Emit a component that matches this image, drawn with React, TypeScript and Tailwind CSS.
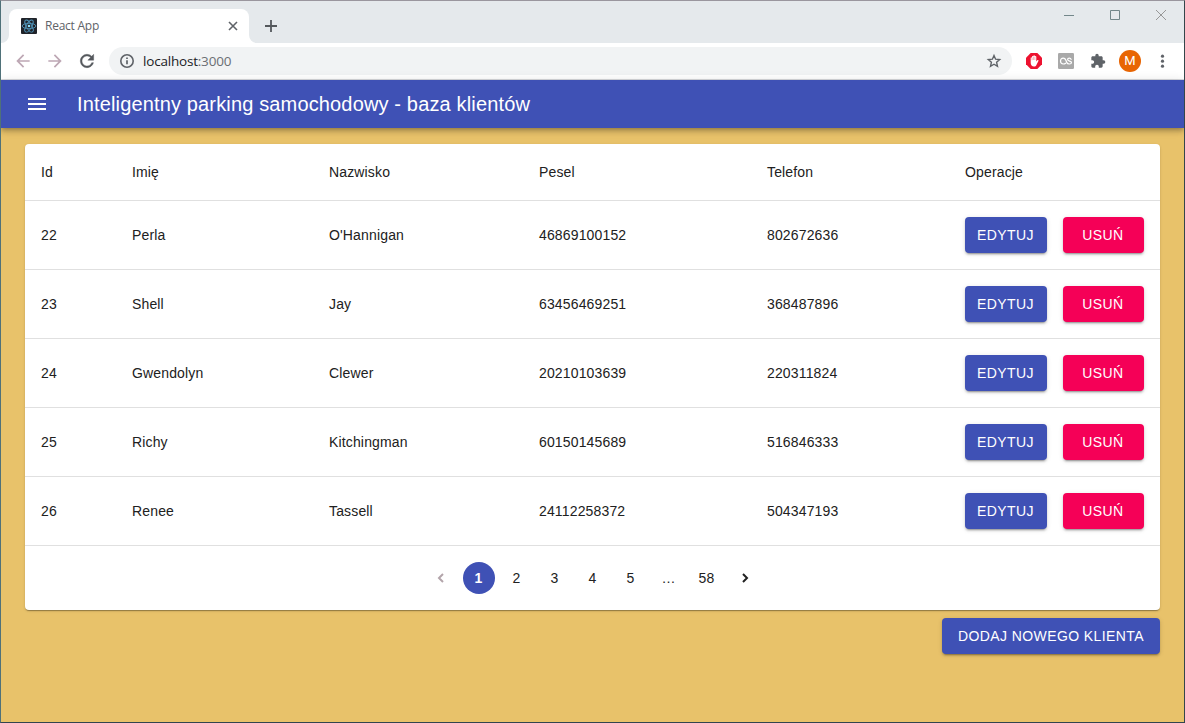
import React from 'react';
import { MdArrowBack, MdArrowForward, MdExtension, MdMenu } from 'react-icons/md';

type Client = { id: number; name: string; surname: string; pesel: string; phone: string };

const clients: Client[] = [
  { id: 22, name: 'Perla', surname: "O'Hannigan", pesel: '46869100152', phone: '802672636' },
  { id: 23, name: 'Shell', surname: 'Jay', pesel: '63456469251', phone: '368487896' },
  { id: 24, name: 'Gwendolyn', surname: 'Clewer', pesel: '20210103639', phone: '220311824' },
  { id: 25, name: 'Richy', surname: 'Kitchingman', pesel: '60150145689', phone: '516846333' },
  { id: 26, name: 'Renee', surname: 'Tassell', pesel: '24112258372', phone: '504347193' },
];

const columns = 'grid grid-cols-[91px_197px_210px_228px_198px_211px] items-center border-b border-[#e0e0e0]';
const raised =
  'flex h-9 items-center justify-center rounded text-[14px] tracking-[0.4px] text-white shadow-[0_3px_1px_-2px_rgba(0,0,0,0.2),0_2px_2px_0_rgba(0,0,0,0.14),0_1px_5px_0_rgba(0,0,0,0.12)]';

function ReactLogo() {
  return (
    <svg width="16" height="16" viewBox="0 0 16 16" className="shrink-0">
      <rect width="16" height="16" rx="1" fill="#20232a" />
      <g fill="none" stroke="#4f93b8" strokeWidth="0.9">
        <ellipse cx="8" cy="8" rx="6.8" ry="2.7" />
        <ellipse cx="8" cy="8" rx="6.8" ry="2.7" transform="rotate(60 8 8)" />
        <ellipse cx="8" cy="8" rx="6.8" ry="2.7" transform="rotate(120 8 8)" />
      </g>
      <circle cx="8" cy="8" r="1.3" fill="#8cdcf8" />
    </svg>
  );
}

function ReloadIcon() {
  return (
    <svg width="20" height="20" viewBox="0 0 24 24" fill="#54585c" className="ml-3">
      <path
        d="M17.65 6.35C16.2 4.9 14.21 4 12 4c-4.42 0-7.99 3.58-7.99 8s3.57 8 7.99 8c3.73 0 6.84-2.55 7.73-6h-2.08c-.82 2.33-3.04 4-5.65 4-3.31 0-6-2.69-6-6s2.69-6 6-6c1.66 0 3.14.69 4.22 1.78L13 11h7V4l-2.35 2.35z"
        stroke="#54585c"
        strokeWidth="0.5"
      />
    </svg>
  );
}

function InfoIcon() {
  return (
    <svg width="16" height="16" viewBox="0 0 16 16" fill="none" stroke="#5f6368">
      <circle cx="8" cy="8" r="6.2" strokeWidth="1.6" />
      <path d="M8 7.2v4M8 4.4v1.7" strokeWidth="1.7" />
    </svg>
  );
}

function StarIcon() {
  return (
    <svg width="16" height="16" viewBox="0 0 16 16" fill="none" stroke="#5f6368" strokeWidth="1.4">
      <path d="M8 2.5l1.6 3.7 4.1.4-3.1 2.7.9 4L8 11.2l-3.5 2.1.9-4-3.1-2.7 4.1-.4z" />
    </svg>
  );
}

function BlockerIcon() {
  return (
    <svg width="16" height="16" viewBox="0 0 16 16">
      <path d="M4.7 0h6.6L16 4.7v6.6L11.3 16H4.7L0 11.3V4.7z" fill="#ed1230" />
      <path
        d="M4.7 8.8V4.9c0-.8 1.2-.8 1.3 0V3.6c0-.8 1.3-.8 1.4 0V2.9c0-.9 1.4-.9 1.5 0v.8c0-.8 1.3-.8 1.4 0v4.8l1-1.2c.5-.6 1.5-.1 1.1.6l-2 4c-.5 1-1.1 1.6-2.4 1.6-2.1 0-3.3-1.5-3.3-3.4z"
        fill="#fff"
      />
      <path d="M6 4.7v2.5M7.4 4v3M8.9 4v3" stroke="#ed1230" strokeWidth="0.35" />
    </svg>
  );
}

function ScrobbleIcon() {
  return (
    <svg width="16" height="16" viewBox="0 0 16 16">
      <rect width="16" height="16" rx="1.2" fill="#a9a9a9" />
      <g fill="none" stroke="#fff" strokeWidth="1.2" strokeLinecap="round" strokeLinejoin="round">
        <path d="M7.7 10.2C7.1 10.7 6.2 11 5.2 11 3.5 11 2.5 9.8 2.5 8.1s1-3 2.7-3c1.5 0 2.2.8 2.7 2.1l.8 2c.4 1.1 1.2 1.8 2.7 1.8 1.2 0 2.1-.5 2.1-1.5 0-1.9-3.9-1-3.9-3 0-.9.7-1.4 1.7-1.4s1.6.4 1.8 1.2" />
      </g>
    </svg>
  );
}

function Browser() {
  return (
    <header className="font-['Open_Sans','Noto_Sans',sans-serif]">
      <div className="flex h-[42px] items-start bg-[#e5e9ec]">
        <div className="flex h-[42px] w-2 items-end">
          <svg width="8" height="8">
            <path d="M8 0v8H0a8 8 0 0 0 8-8z" fill="#fff" />
          </svg>
        </div>
        <div className="mt-2 flex h-[34px] w-[240px] items-center rounded-t-lg bg-white pr-2 pl-3">
          <ReactLogo />
          <span className="ml-2 flex-1 text-[12px] tracking-[-0.25px] text-[#5f6368]">React App</span>
          <svg width="16" height="16" viewBox="0 0 16 16" stroke="#5f6368" strokeWidth="1.6">
            <path d="M4 4l8 8M12 4l-8 8" />
          </svg>
        </div>
        <div className="flex h-[42px] w-2 items-end">
          <svg width="8" height="8">
            <path d="M0 0v8h8a8 8 0 0 1-8-8z" fill="#fff" />
          </svg>
        </div>
        <svg width="14" height="14" viewBox="0 0 14 14" className="mt-[18px] ml-[7px]" stroke="#54585c" strokeWidth="1.8">
          <path d="M7 1v12M1 7h12" />
        </svg>
        <svg width="120" height="30" viewBox="0 0 120 30" className="mr-px ml-auto" fill="none">
          <path d="M1 14.5h10" stroke="#73878a" />
          <path d="M47.5 9.5h9v9h-9z" stroke="#73878a" />
          <path d="M93 9l10 10M103 9L93 19" stroke="#979797" />
        </svg>
      </div>
      <div className="flex h-9 items-center bg-white px-3">
        <MdArrowBack className="size-5 text-[#bda7b4]" />
        <MdArrowForward className="ml-3 size-5 text-[#bda7b4]" />
        <ReloadIcon />
        <div className="ml-3 flex h-7 w-[903px] items-center rounded-full bg-[#f1f3f4] px-[10px]">
          <InfoIcon />
          <span className="ml-2 flex-1 text-[13.5px] tracking-[-0.2px] text-[#202124]">
            localhost<span className="text-[#6b6f73]">:3000</span>
          </span>
          <StarIcon />
        </div>
        <div className="ml-[14px] flex items-center gap-4">
          <BlockerIcon />
          <ScrobbleIcon />
          <MdExtension className="size-4 text-[#5f6368]" />
          <div className="-mx-[3px] flex size-[22px] items-center justify-center rounded-full bg-[#e86503] font-[Roboto,sans-serif] text-[13px] text-white">
            M
          </div>
          <svg width="16" height="18" viewBox="0 0 16 18" fill="#5f6368">
            <circle cx="8.5" cy="4.2" r="1.6" />
            <circle cx="8.5" cy="9.2" r="1.6" />
            <circle cx="8.5" cy="14.2" r="1.6" />
          </svg>
        </div>
      </div>
      <div className="h-px bg-[#d9dadd]" />
    </header>
  );
}

function Pagination() {
  const cell = 'mx-[3px] flex size-8 items-center justify-center rounded-full';
  return (
    <nav className="flex h-16 items-center justify-center text-[14px] tracking-[0.15px]">
      <span className={cell}>
        <svg width="18" height="18" viewBox="0 0 18 18" fill="none" stroke="#b3a5ab" strokeWidth="2">
          <path d="M11 5L7 9l4 4" />
        </svg>
      </span>
      <span className="mx-[3px] flex size-8 items-center justify-center rounded-full bg-[#3f51b5] font-bold text-white">1</span>
      {['2', '3', '4', '5', '…', '58'].map((page) => (
        <span key={page} className={cell}>
          {page}
        </span>
      ))}
      <span className={cell}>
        <svg width="18" height="18" viewBox="0 0 18 18" fill="none" stroke="#212121" strokeWidth="2">
          <path d="M7 5l4 4-4 4" />
        </svg>
      </span>
    </nav>
  );
}

export default function App() {
  return (
    <div className="flex h-[723px] w-[1185px] flex-col overflow-hidden border border-t-[#9a969e] border-r-[#34464b] border-b-[#31454f] border-l-[#4f7179] bg-[#e8c26a] font-['Liberation_Sans',Arial,sans-serif] text-[#212121]">
      <Browser />
      <div className="flex h-12 shrink-0 items-center bg-[#3f51b5] pl-6 text-white shadow-[0_2px_4px_-1px_rgba(0,0,0,0.2),0_4px_5px_0_rgba(0,0,0,0.14),0_1px_10px_0_rgba(0,0,0,0.12)]">
        <MdMenu className="size-6" />
        <h1 className="ml-7 text-[20px] tracking-[0.15px]">Inteligentny parking samochodowy - baza klientów</h1>
      </div>
      <main className="flex flex-col items-end px-6 pt-4">
        <section className="w-[1135px] rounded bg-white text-[14px] tracking-[0.15px] shadow-[0_2px_1px_-1px_rgba(0,0,0,0.2),0_1px_1px_0_rgba(0,0,0,0.14),0_1px_3px_0_rgba(0,0,0,0.12)]">
          <div className={`${columns} h-[57px]`}>
            {['Id', 'Imię', 'Nazwisko', 'Pesel', 'Telefon', 'Operacje'].map((title) => (
              <span key={title} className="pl-4">
                {title}
              </span>
            ))}
          </div>
          {clients.map((client) => (
            <div key={client.id} className={`${columns} h-[69px]`}>
              <span className="pl-4">{client.id}</span>
              <span className="pl-4">{client.name}</span>
              <span className="pl-4">{client.surname}</span>
              <span className="pl-4">{client.pesel}</span>
              <span className="pl-4">{client.phone}</span>
              <div className="flex gap-4 pl-4">
                <button className={`${raised} w-[82px] bg-[#3f51b5] pr-px`}>EDYTUJ</button>
                <button className={`${raised} w-[81px] bg-[#f50057] pr-px`}>USUŃ</button>
              </div>
            </div>
          ))}
          <Pagination />
        </section>
        <button className={`${raised} mt-2 w-[218px] bg-[#3f51b5]`}>DODAJ NOWEGO KLIENTA</button>
      </main>
    </div>
  );
}
